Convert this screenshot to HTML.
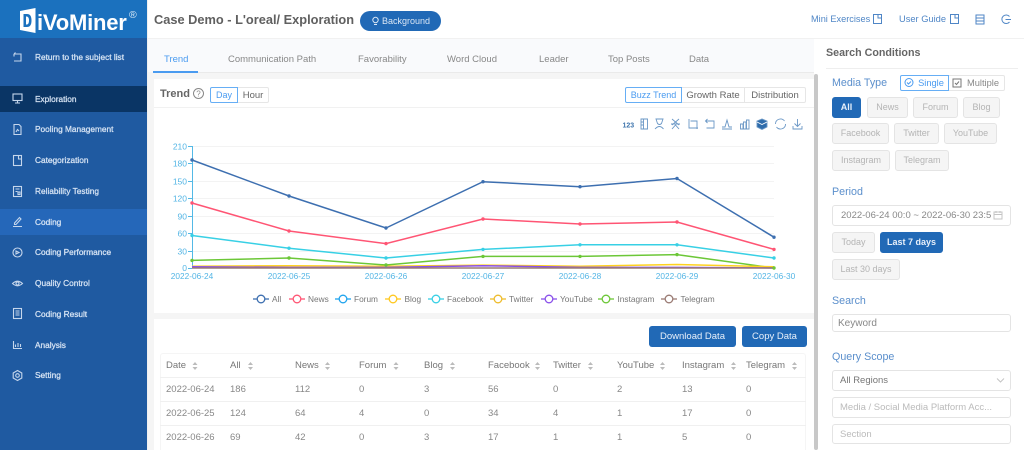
<!DOCTYPE html>
<html><head><meta charset="utf-8"><style>
html,body{margin:0;padding:0;width:1024px;height:450px;overflow:hidden;background:#fff;font-family:"Liberation Sans",sans-serif;color:#666}
.a{position:absolute;white-space:nowrap}
.n{left:35px;color:#d7e4f4;font-size:8.300px;line-height:12px;-webkit-text-stroke:.25px #d7e4f4}
.ic{position:absolute;left:11px;width:13px;height:13px}
.ic *{fill:none;stroke:#c5d6ec;stroke-width:1.1}
.t{color:#888;font-size:9.500px;line-height:14px;top:53px}
.b{position:absolute;background:#f5f5f5;border:1px solid #e4e4e4;border-radius:3px;color:#b4b4b4;font-size:9px;text-align:center;box-sizing:border-box;height:21px;line-height:19px}
.pri{background:#2169b6;border-color:#2169b6;color:#e8f0fa;font-weight:bold}
.bl{color:#5b8fcc;font-size:10.700px;line-height:14px}
.inp{position:absolute;left:832px;width:179px;box-sizing:border-box;background:#fff;border:1px solid #e4e4e4;border-radius:3px;height:20px;line-height:19px;font-size:9.500px;padding-left:7px;color:#bbb;white-space:nowrap}
.th{font-size:9.500px;color:#777;line-height:12px}
.td{font-size:9.500px;color:#888;line-height:12px}
.seg{position:absolute;box-sizing:border-box;height:16px;line-height:15px;font-size:9.500px;text-align:center;border:1px solid #e6e6e6;color:#666;background:#fff}
.on{border-color:#66aef5;color:#4a9bf0;z-index:2}
svg text{font-family:"Liberation Sans",sans-serif}
</style></head><body>
<div style="position:absolute;left:0;top:0;width:1024px;height:450px;overflow:hidden">

<!-- sidebar -->
<div class="a" style="left:0;top:0;width:147px;height:450px;background:#1f5aa1"></div>
<div class="a" style="left:0;top:0;width:147px;height:38px;background:#1b71be"></div>
<div class="a" style="left:0;top:86px;width:147px;height:26px;background:#0a3565"></div>
<div class="a" style="left:0;top:209px;width:147px;height:26px;background:#2567b9"></div>
<div class="a" style="left:147px;top:0;width:1px;height:450px;background:#f0f0f0"></div>

<svg class="a" style="left:20px;top:8px" width="16" height="25" viewBox="0 0 16 25"><path d="M0 3 L15.500 0 V25 L0 22Z" fill="#fff"/><path d="M3.500 6 H7 Q11.500 6 11.500 12.500 Q11.500 19 7 19 H3.500Z" fill="#1b71be"/><path d="M6 8.500 H7 Q9 9 9 12.500 Q9 16 7 16.500 H6Z" fill="#fff"/></svg>
<div class="a" style="left:37px;top:9px;font-size:22px;line-height:28px;font-weight:bold;color:#fff;letter-spacing:-.2px">iVoMiner</div>
<div class="a" style="left:129px;top:9px;font-size:10.500px;line-height:12px;color:#dcebf8">®</div>

<div class="a n" style="top:51px">Return to the subject list</div>
<div class="a n" style="top:93px">Exploration</div>
<div class="a n" style="top:123px">Pooling Management</div>
<div class="a n" style="top:154px">Categorization</div>
<div class="a n" style="top:185px">Reliability Testing</div>
<div class="a n" style="top:216px">Coding</div>
<div class="a n" style="top:246px">Coding Performance</div>
<div class="a n" style="top:277px">Quality Control</div>
<div class="a n" style="top:308px">Coding Result</div>
<div class="a n" style="top:339px">Analysis</div>
<div class="a n" style="top:369px">Setting</div>

<svg class="ic" style="top:51px" viewBox="0 0 13 13"><path d="M3 3H10V10H3M3 3V5.500M3 3L4.500 1.500"/></svg>
<svg class="ic" style="top:92px" viewBox="0 0 13 13"><rect x="2" y="2" width="9" height="6.500"/><path d="M4 11H9M6.500 8.500V11"/></svg>
<svg class="ic" style="top:123px" viewBox="0 0 13 13"><path d="M3 1.500H8L10 3.500V11.500H3ZM5 9L6.500 6.500L8 8"/></svg>
<svg class="ic" style="top:154px" viewBox="0 0 13 13"><rect x="2.500" y="1.500" width="8" height="10"/><path d="M7.500 1.500V5H10"/></svg>
<svg class="ic" style="top:185px" viewBox="0 0 13 13"><rect x="2.500" y="1.500" width="8" height="10"/><path d="M4.500 4H8.500M4.500 6.500H6.500"/><rect x="7" y="7" width="2" height="2.500"/></svg>
<svg class="ic" style="top:215px" viewBox="0 0 13 13"><path d="M3.500 8L8.500 2.500L10 4L5 9.500H3.500ZM2 11.500H11"/></svg>
<svg class="ic" style="top:246px" viewBox="0 0 13 13"><circle cx="6.500" cy="6.500" r="4.500"/><path d="M5 5L8 6.500L5 8Z" fill="#c5d6ec"/></svg>
<svg class="ic" style="top:277px" viewBox="0 0 13 13"><path d="M1.500 6.500Q6.500 2 11.500 6.500Q6.500 11 1.500 6.500Z"/><circle cx="6.500" cy="6.500" r="1.500"/></svg>
<svg class="ic" style="top:307px" viewBox="0 0 13 13"><rect x="2.500" y="1.500" width="8" height="10"/><path d="M4.500 4H8.500M4.500 6H8.500M4.500 8H8.500"/></svg>
<svg class="ic" style="top:338px" viewBox="0 0 13 13"><path d="M2.500 3V10.500H11M4.500 9V6.500M7 9V5M9.500 9V6"/></svg>
<svg class="ic" style="top:369px" viewBox="0 0 13 13"><path d="M6.500 1.500L10.800 4V9L6.500 11.500L2.200 9V4Z"/><circle cx="6.500" cy="6.500" r="1.800"/></svg>

<!-- header -->
<div class="a" style="left:148px;top:38px;width:876px;height:1px;background:#f1f1f1"></div>
<div class="a" style="left:154px;top:11px;font-size:12.800px;line-height:17px;font-weight:bold;color:#606060">Case Demo - L'oreal/ Exploration</div>
<div class="a" style="left:360px;top:11px;width:81px;height:20px;border-radius:10px;background:#2169b6"></div>
<svg class="a" style="left:371px;top:16px" width="9" height="11" viewBox="0 0 9 11"><circle cx="4.500" cy="4" r="2.700" fill="none" stroke="#dbe7f5"/><path d="M3 8.500H6" stroke="#dbe7f5"/></svg>
<div class="a" style="left:382px;top:15px;font-size:9px;line-height:13px;color:#dbe7f5">Background</div>

<div class="a" style="left:811px;top:13px;font-size:9.200px;line-height:13px;color:#4f86c6">Mini Exercises</div>
<svg class="a" style="left:872px;top:13px" width="11" height="12" viewBox="0 0 11 12"><path d="M1.500 1.500H9.500V10.500H1.500ZM6 1.500V5H9.500" fill="none" stroke="#4f86c6"/></svg>
<div class="a" style="left:899px;top:13px;font-size:9.300px;line-height:13px;color:#4f86c6">User Guide</div>
<svg class="a" style="left:949px;top:13px" width="11" height="12" viewBox="0 0 11 12"><path d="M1.500 1.500H9.500V10.500H1.500ZM6 1.500V5H9.500" fill="none" stroke="#4f86c6"/></svg>
<svg class="a" style="left:975px;top:14px" width="10" height="11" viewBox="0 0 10 11"><path d="M1 1H9V10H1ZM1 4H9M1 7H9" fill="none" stroke="#4f86c6"/></svg>
<svg class="a" style="left:1000px;top:14px" width="12" height="11" viewBox="0 0 12 11"><path d="M9.500 2.500A4.300 4.300 0 1 0 9.500 8M5.500 5.500H11" fill="none" stroke="#4f86c6"/></svg>

<!-- content bg -->
<div class="a" style="left:148px;top:39px;width:666px;height:411px;background:#f5f5f5"></div>
<div class="a" style="left:148px;top:39px;width:666px;height:33px;background:#f9fafc"></div>
<div class="a" style="left:153px;top:72px;width:661px;height:1px;background:#eaeaea"></div>
<div class="a" style="left:153px;top:71px;width:45px;height:2px;background:#4a9bf0"></div>
<div class="a t" style="left:164px;color:#4a9bf0">Trend</div>
<div class="a t" style="left:228px">Communication Path</div>
<div class="a t" style="left:358px">Favorability</div>
<div class="a t" style="left:447px">Word Cloud</div>
<div class="a t" style="left:539px">Leader</div>
<div class="a t" style="left:608px">Top Posts</div>
<div class="a t" style="left:689px">Data</div>

<!-- panel 1 -->
<div class="a" style="left:154px;top:79px;width:660px;height:234px;background:#fff"></div>
<div class="a" style="left:154px;top:107px;width:660px;height:1px;background:#f1f1f1"></div>
<div class="a" style="left:160px;top:87px;font-size:11px;line-height:15px;font-weight:bold;color:#666">Trend</div>
<svg class="a" style="left:192px;top:87px" width="13" height="13" viewBox="0 0 13 13"><circle cx="6.500" cy="6.500" r="5" fill="none" stroke="#888"/><text x="6.500" y="9.500" font-size="8" fill="#888" text-anchor="middle">?</text></svg>
<div class="seg on" style="left:210px;top:87px;width:28px;border-radius:2px 0 0 2px;font-size:9px">Day</div>
<div class="seg" style="left:237px;top:87px;width:32px;border-radius:0 2px 2px 0">Hour</div>
<div class="seg on" style="left:625px;top:87px;width:57px;border-radius:2px 0 0 2px;font-size:9px">Buzz Trend</div>
<div class="seg" style="left:681px;top:87px;width:64px">Growth Rate</div>
<div class="seg" style="left:744px;top:87px;width:62px;border-radius:0 2px 2px 0">Distribution</div>

<!-- toolbox -->
<svg class="a" style="left:620px;top:116px" width="190" height="16" viewBox="0 0 190 16" fill="none" stroke="#6a97c6" stroke-width=".9">
<text x="2.500" y="11.500" font-size="7" font-weight="bold" fill="#3f75ad" stroke="none">123</text>
<path d="M21 3H27.500V13H21ZM23.500 3V13M21 6H23.500M21 9H23.500"/>
<path d="M36 3H43L41.500 7.500Q39.500 9.500 37.500 7.500ZM35 13Q39.500 8 43.500 13"/>
<path d="M52 3L59 9M59 3L52 9M51 8H60M52 13L55.500 9L59 13"/>
<path d="M69 3V12H78M70.500 5H77V13"/>
<path d="M85.500 5H94V12H86.500M87.500 3L85.500 5L87.500 7"/>
<path d="M102 11H105L107 4L109 11H112M102 13H112"/>
<path d="M120.500 8H123V13H120.500ZM123.500 6H126V13H123.500ZM126.500 4H129V13H126.500Z"/>
<path d="M137 5L142 3L147 5V11L142 13.500L137 11Z" fill="#2f6cab"/><path d="M137 6L142 8.500L147 6" stroke="#fff"/>
<path d="M155.500 8A5 5 0 0 1 164.500 5M165.500 8A5 5 0 0 1 156.500 11"/>
<path d="M177.500 3V10M174.500 7.500L177.500 10.500L180.500 7.500M173 10V13H182V10"/>
</svg>

<!-- chart -->
<svg class="a" style="left:154px;top:130px" width="658" height="183" viewBox="154 130 658 183">
<g stroke="#f3f3f3" stroke-width="1"><path d="M192 146.500H774M192 163.500H774M192 181.500H774M192 198.500H774M192 216.500H774M192 233.500H774M192 251.500H774"/></g>
<g stroke="#53b9e6" stroke-width="1" fill="none"><path d="M192.500 146V268M188 146.500H192M188 163.500H192M188 181.500H192M188 198.500H192M188 216.500H192M188 233.500H192M188 251.500H192M188 268.500H192"/></g>
<g font-size="8.500" fill="#53b5e5" text-anchor="end">
<text x="187" y="149.500">210</text><text x="187" y="166.500">180</text><text x="187" y="184.500">150</text><text x="187" y="201.500">120</text><text x="187" y="219.500">90</text><text x="187" y="236.500">60</text><text x="187" y="254.500">30</text><text x="187" y="271">0</text>
</g>
<g font-size="8.300" fill="#53b5e5" text-anchor="middle">
<text x="192" y="279">2022-06-24</text><text x="289" y="279">2022-06-25</text><text x="386" y="279">2022-06-26</text><text x="483" y="279">2022-06-27</text><text x="580" y="279">2022-06-28</text><text x="677" y="279">2022-06-29</text><text x="774" y="279">2022-06-30</text>
</g>
<g fill="none" stroke-width="1.500">
<polyline stroke="#3d6fb0" points="192,160 289,196 386,228 483,181.700 580,186.700 677,178.500 774,237.200"/>
<polyline stroke="#ff5574" points="192,203 289,231 386,243.600 483,219 580,224 677,222 774,249.400"/>
<polyline stroke="#38d0e5" points="192,235.500 289,248.200 386,258 483,249.400 580,244.800 677,244.800 774,258"/>
<polyline stroke="#6cc737" points="192,260.400 289,258 386,265 483,256.400 580,256.400 677,254.600 774,268"/>
<polyline stroke="#ffd21f" points="192,266.300 289,265.700 386,266.300 483,265.100 580,266.300 677,264.500 774,266.800"/>
<polyline stroke="#8a50ea" points="192,266.800 289,267.400 386,267.400 483,265.700 580,267.400 677,267.400 774,268"/>
<polyline stroke="#9a7b74" points="192,268 289,268 386,268 483,268 580,268 677,268 774,268"/>
</g>
<g fill="#3d6fb0"><circle cx="192" cy="160" r="1.700"/><circle cx="289" cy="196" r="1.700"/><circle cx="386" cy="228" r="1.700"/><circle cx="483" cy="181.700" r="1.700"/><circle cx="580" cy="186.700" r="1.700"/><circle cx="677" cy="178.500" r="1.700"/><circle cx="774" cy="237.200" r="1.700"/></g>
<g fill="#ff5574"><circle cx="192" cy="203" r="1.700"/><circle cx="289" cy="231" r="1.700"/><circle cx="386" cy="243.600" r="1.700"/><circle cx="483" cy="219" r="1.700"/><circle cx="580" cy="224" r="1.700"/><circle cx="677" cy="222" r="1.700"/><circle cx="774" cy="249.400" r="1.700"/></g>
<g fill="#38d0e5"><circle cx="192" cy="235.500" r="1.700"/><circle cx="289" cy="248.200" r="1.700"/><circle cx="386" cy="258" r="1.700"/><circle cx="483" cy="249.400" r="1.700"/><circle cx="580" cy="244.800" r="1.700"/><circle cx="677" cy="244.800" r="1.700"/><circle cx="774" cy="258" r="1.700"/></g>
<g fill="#6cc737"><circle cx="192" cy="260.400" r="1.700"/><circle cx="289" cy="258" r="1.700"/><circle cx="386" cy="265" r="1.700"/><circle cx="483" cy="256.400" r="1.700"/><circle cx="580" cy="256.400" r="1.700"/><circle cx="677" cy="254.600" r="1.700"/><circle cx="774" cy="268" r="1.700"/></g>
<!-- legend -->
<g fill="#fff" stroke-width="1.300">
<g stroke="#3d6fb0"><path d="M253 299H269"/><circle cx="261" cy="299" r="3.800"/></g>
<g stroke="#ff5574"><path d="M289 299H305"/><circle cx="297" cy="299" r="3.800"/></g>
<g stroke="#20a4ee"><path d="M335 299H351"/><circle cx="343" cy="299" r="3.800"/></g>
<g stroke="#ffc81f"><path d="M385 299H401"/><circle cx="393" cy="299" r="3.800"/></g>
<g stroke="#38d0e5"><path d="M428 299H444"/><circle cx="436" cy="299" r="3.800"/></g>
<g stroke="#eebc2c"><path d="M490 299H506"/><circle cx="498" cy="299" r="3.800"/></g>
<g stroke="#8a50ea"><path d="M541 299H557"/><circle cx="549" cy="299" r="3.800"/></g>
<g stroke="#6cc737"><path d="M598 299H614"/><circle cx="606" cy="299" r="3.800"/></g>
<g stroke="#9a7b74"><path d="M661 299H677"/><circle cx="669" cy="299" r="3.800"/></g>
</g>
<g font-size="8.300" fill="#777">
<text x="272" y="302">All</text><text x="308" y="302">News</text><text x="354" y="302">Forum</text><text x="404.500" y="302">Blog</text><text x="447" y="302">Facebook</text><text x="509" y="302">Twitter</text><text x="560" y="302">YouTube</text><text x="617.500" y="302">Instagram</text><text x="680.500" y="302">Telegram</text>
</g>
</svg>

<!-- panel 2 -->
<div class="a" style="left:154px;top:319px;width:660px;height:131px;background:#fff"></div>
<div class="a" style="left:649px;top:326px;width:87px;height:21px;background:#2169b6;border-radius:3px;color:#e8f0fa;font-size:9.500px;line-height:21px;text-align:center">Download Data</div>
<div class="a" style="left:742px;top:326px;width:65px;height:21px;background:#2169b6;border-radius:3px;color:#e8f0fa;font-size:9.500px;line-height:21px;text-align:center">Copy Data</div>
<div class="a" style="left:160px;top:353px;width:646px;height:97px;box-sizing:border-box;border:1px solid #f5f5f5;border-bottom:0;border-radius:3px 3px 0 0"></div>
<div class="a" style="left:160px;top:377px;width:646px;height:1px;background:#f0f0f0"></div>
<div class="a" style="left:160px;top:401px;width:646px;height:1px;background:#f0f0f0"></div>
<div class="a" style="left:160px;top:425px;width:646px;height:1px;background:#f0f0f0"></div>

<div class="a th" style="left:166px;top:360px">Date</div>
<div class="a th" style="left:230px;top:360px">All</div>
<div class="a th" style="left:295px;top:360px">News</div>
<div class="a th" style="left:359px;top:360px">Forum</div>
<div class="a th" style="left:424px;top:360px">Blog</div>
<div class="a th" style="left:488px;top:360px">Facebook</div>
<div class="a th" style="left:553px;top:360px">Twitter</div>
<div class="a th" style="left:617px;top:360px">YouTube</div>
<div class="a th" style="left:682px;top:360px">Instagram</div>
<div class="a th" style="left:746px;top:360px">Telegram</div>
<svg class="a" style="left:150px;top:360px" width="660" height="12" viewBox="150 360 660 12" fill="#bbb">
<path d="M192.500 365L195 362L197.500 365ZM192.500 367L195 370L197.500 367Z"/>
<path d="M248 365L250.500 362L253 365ZM248 367L250.500 370L253 367Z"/>
<path d="M325 365L327.500 362L330 365ZM325 367L327.500 370L330 367Z"/>
<path d="M393.500 365L396 362L398.500 365ZM393.500 367L396 370L398.500 367Z"/>
<path d="M450 365L452.500 362L455 365ZM450 367L452.500 370L455 367Z"/>
<path d="M535 365L537.500 362L540 365ZM535 367L537.500 370L540 367Z"/>
<path d="M588 365L590.500 362L593 365ZM588 367L590.500 370L593 367Z"/>
<path d="M660 365L662.500 362L665 365ZM660 367L662.500 370L665 367Z"/>
<path d="M731 365L733.500 362L736 365ZM731 367L733.500 370L736 367Z"/>
<path d="M792 365L794.500 362L797 365ZM792 367L794.500 370L797 367Z"/>
</svg>

<div class="a td" style="left:166px;top:384px">2022-06-24</div><div class="a td" style="left:230px;top:384px">186</div><div class="a td" style="left:295px;top:384px">112</div><div class="a td" style="left:359px;top:384px">0</div><div class="a td" style="left:424px;top:384px">3</div><div class="a td" style="left:488px;top:384px">56</div><div class="a td" style="left:553px;top:384px">0</div><div class="a td" style="left:617px;top:384px">2</div><div class="a td" style="left:682px;top:384px">13</div><div class="a td" style="left:746px;top:384px">0</div>
<div class="a td" style="left:166px;top:408px">2022-06-25</div><div class="a td" style="left:230px;top:408px">124</div><div class="a td" style="left:295px;top:408px">64</div><div class="a td" style="left:359px;top:408px">4</div><div class="a td" style="left:424px;top:408px">0</div><div class="a td" style="left:488px;top:408px">34</div><div class="a td" style="left:553px;top:408px">4</div><div class="a td" style="left:617px;top:408px">1</div><div class="a td" style="left:682px;top:408px">17</div><div class="a td" style="left:746px;top:408px">0</div>
<div class="a td" style="left:166px;top:432px">2022-06-26</div><div class="a td" style="left:230px;top:432px">69</div><div class="a td" style="left:295px;top:432px">42</div><div class="a td" style="left:359px;top:432px">0</div><div class="a td" style="left:424px;top:432px">3</div><div class="a td" style="left:488px;top:432px">17</div><div class="a td" style="left:553px;top:432px">1</div><div class="a td" style="left:617px;top:432px">1</div><div class="a td" style="left:682px;top:432px">5</div><div class="a td" style="left:746px;top:432px">0</div>

<!-- scrollbar -->
<div class="a" style="left:814px;top:74px;width:4px;height:376px;background:#c8c8c8;border-radius:2px"></div>

<!-- right panel -->
<div class="a" style="left:826px;top:46px;font-size:10.700px;line-height:15px;font-weight:bold;color:#666">Search Conditions</div>
<div class="a" style="left:826px;top:68px;width:192px;height:1px;background:#eee"></div>
<div class="a bl" style="left:832px;top:76px">Media Type</div>
<div class="seg on" style="left:900px;top:75px;width:49px;border-radius:2px 0 0 2px;padding-left:13px;font-size:9.300px">Single</div>
<svg class="a" style="left:904px;top:77px;z-index:3" width="10" height="11" viewBox="0 0 10 11"><circle cx="5" cy="5.500" r="4" fill="none" stroke="#4a9bf0"/><path d="M3 5.500L4.500 7L7 4.500" fill="none" stroke="#4a9bf0"/></svg>
<div class="seg" style="left:948px;top:75px;width:57px;border-radius:0 2px 2px 0;padding-left:13px;color:#888;font-size:9.300px">Multiple</div>
<svg class="a" style="left:952px;top:78px;z-index:3" width="10" height="10" viewBox="0 0 10 10"><rect x="1" y="1" width="8" height="8" fill="none" stroke="#777"/><path d="M3 5L4.500 6.500L7 3.500" fill="none" stroke="#777"/></svg>

<div class="b pri" style="left:832px;top:97px;width:29px">All</div>
<div class="b" style="left:867px;top:97px;width:41px">News</div>
<div class="b" style="left:913px;top:97px;width:45px">Forum</div>
<div class="b" style="left:963px;top:97px;width:37px">Blog</div>
<div class="b" style="left:832px;top:123px;width:57px">Facebook</div>
<div class="b" style="left:894px;top:123px;width:45px">Twitter</div>
<div class="b" style="left:944px;top:123px;width:53px">YouTube</div>
<div class="b" style="left:832px;top:150px;width:58px">Instagram</div>
<div class="b" style="left:895px;top:150px;width:54px">Telegram</div>

<div class="a bl" style="left:832px;top:185px">Period</div>
<div class="inp" style="top:205px;height:21px;line-height:19px;padding-left:8px;color:#888">2022-06-24 00:0 ~ 2022-06-30 23:5</div>
<svg class="a" style="left:993px;top:210px" width="10" height="10" viewBox="0 0 10 10"><rect x="1" y="2" width="8" height="7" fill="none" stroke="#c4c4c4"/><path d="M1 4.500H9M3 1V3M7 1V3" stroke="#c4c4c4"/></svg>
<div class="b" style="left:832px;top:232px;width:43px">Today</div>
<div class="b pri" style="left:880px;top:232px;width:63px">Last 7 days</div>
<div class="b" style="left:832px;top:259px;width:68px">Last 30 days</div>

<div class="a bl" style="left:832px;top:294px">Search</div>
<div class="inp" style="top:314px;height:18px;line-height:17px;padding-left:5px;color:#888;font-size:10px">Keyword</div>
<div class="a bl" style="left:832px;top:350px">Query Scope</div>
<div class="inp" style="top:370px;height:21px;line-height:19px;color:#777">All Regions</div>
<svg class="a" style="left:996px;top:377px" width="9" height="7" viewBox="0 0 9 7"><path d="M1 1.500L4.500 5L8 1.500" fill="none" stroke="#c4c4c4"/></svg>
<div class="inp" style="top:397px;height:21px;line-height:19px">Media / Social Media Platform Acc...</div>
<div class="inp" style="top:424px;height:20px;line-height:19px">Section</div>

</div>
</body></html>
